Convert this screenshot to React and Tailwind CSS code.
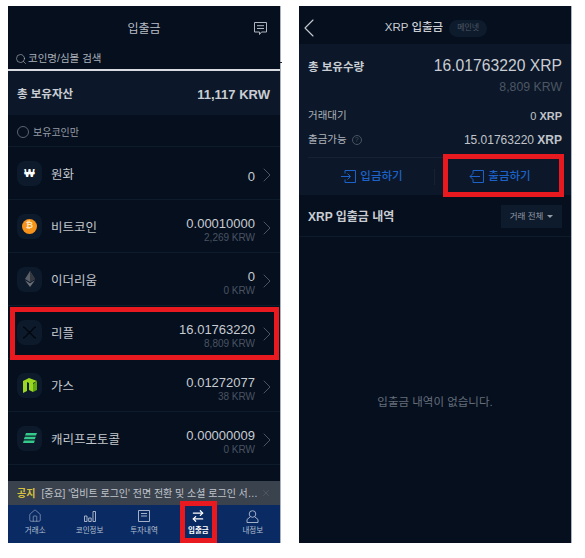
import React from "react";
import { ChevronRight, ChevronLeft, Search, X, House, ArrowRightLeft } from "lucide-react";

const FONT = { fontFamily: '"Liberation Sans","Noto Sans CJK KR",sans-serif' };

function CoinIcon({ children }) {
  return <div className="w-[25px] h-[25px] rounded-[8px] bg-[#0d1a2b] flex items-center justify-center shrink-0">{children}</div>;
}

const coins = [
  { name: "원화", amt: "0", krw: null, icon: <span className="text-white text-[11px] font-bold">₩</span> },
  { name: "비트코인", amt: "0.00010000", krw: "2,269 KRW", icon: (
    <div className="w-[15px] h-[15px] rounded-full bg-[#f7931a] flex items-center justify-center text-[#ffe3b8] text-[9px] font-bold">₿</div>
  ) },
  { name: "이더리움", amt: "0", krw: "0 KRW", icon: (
    <svg width="10" height="16" viewBox="0 0 10 16"><path d="M5 0L0 8l5 3 5-3z" fill="#5b5f66"/><path d="M5 0v11l5-3z" fill="#34383f"/><path d="M0 9.200L5 16l5-6.800-5 3z" fill="#6b6f76"/></svg>
  ) },
  { name: "리플", amt: "16.01763220", krw: "8,809 KRW", icon: (
    <svg width="15" height="13" viewBox="0 0 15 13" fill="none" stroke="#02060d" strokeWidth="1.500"><path d="M1 1c3 0 4 5 6.500 5S11 1 14 1M1 12c3 0 4-5 6.500-5S11 12 14 12"/></svg>
  ) },
  { name: "가스", amt: "0.01272077", krw: "38 KRW", icon: (
    <svg width="14" height="15" viewBox="0 0 14 15"><path d="M0 3l6-3 8 3-4 2v9l-4-2V5L4 4v9l-4 2z" fill="#9ad81f"/><path d="M10 6v8l4-2V3z" fill="#5fa80f"/></svg>
  ) },
  { name: "캐리프로토콜", amt: "0.00000009", krw: "0 KRW", icon: (
    <svg width="14" height="10" viewBox="0 0 14 10" fill="#35c98a"><path d="M3 0h11l-1 2.500H2zM1.800 3.700h11l-1 2.600h-11zM.8 7.500h11L11 10H0z"/></svg>
  ) },
];

function CoinRow({ c }) {
  return (
    <div className="h-[53px] shrink-0 flex items-center pl-[9px] pr-[1px] border-b border-[#0e1b2b]">
      <CoinIcon>{c.icon}</CoinIcon>
      <span className="ml-[9px] mt-[4px] text-[12.500px] text-[#c3c7cd] flex-1">{c.name}</span>
      <div className="text-right mt-[8px]">
        <div className="text-[13px] leading-[16px] text-[#c8ccd2]">{c.amt}</div>
        {c.krw && <div className="text-[10px] leading-[12px] text-[#4a5361]">{c.krw}</div>}
      </div>
      <ChevronRight size={24} strokeWidth={0.800} className="text-[#5d6673] shrink-0 mt-[4px]" />
    </div>
  );
}

function NavItem({ icon, label, active }) {
  return (
    <div className={`flex-1 flex flex-col items-center pt-[3px] ${active ? "text-white font-bold" : "text-[#b4c0d2]"}`}>
      <div className="h-[16px] flex items-center">{icon}</div>
      <span className="text-[7.500px] leading-[10px] mt-[2px]">{label}</span>
    </div>
  );
}

function RedBox({ className }) {
  return <div className={`absolute border-[5px] border-[#e8191f] pointer-events-none ${className}`} />;
}

export default function App() {
  return (
    <div className="relative w-[585px] h-[558px] bg-white overflow-hidden" style={FONT}>
      <div className="flex gap-[19px] pl-[8px] pt-[6px]">
        {/* left */}
        <div className="w-[272px] h-[537px] bg-[#050f1e] flex flex-col overflow-hidden">
          <div className="h-[37px] shrink-0 flex items-center justify-center relative">
            <span className="text-[12px] text-[#b9bec6] mt-[8px]">입출금</span>
            <svg className="absolute right-[13px] top-[16px]" width="13" height="14" viewBox="0 0 13 14" fill="none" stroke="#b0b5bd" strokeWidth="1">
              <path d="M.5.500h12v9.500H7.500l-2 2.500V10H.5z"/><path d="M3 3.700h7M3 6.500h7"/>
            </svg>
          </div>
          <div className="h-[28px] shrink-0 flex items-center pl-[7px] pt-[5px] border-b-2 border-[#d8dce2]">
            <Search size={12} strokeWidth={1.200} className="text-[#b5bac2]" />
            <span className="ml-[1px] text-[10.500px] text-[#aab0b9]">코인명/심볼 검색</span>
          </div>
          <div className="h-[44px] shrink-0 bg-[#0c1829] flex items-center justify-between pl-[9px] pr-[10px] pt-[4px] font-bold text-[#c9cdd3]">
            <span className="text-[11.500px]">총 보유자산</span>
            <span className="text-[13px]">11,117 KRW</span>
          </div>
          <div className="h-[32px] shrink-0 flex items-center pl-[9px] pt-[3px] border-b border-[#0e1b2b]">
            <div className="w-[12px] h-[12px] rounded-full border border-[#5a6370]" />
            <span className="ml-[4px] text-[10px] text-[#969ca6]">보유코인만</span>
          </div>
          {coins.map((c) => <CoinRow key={c.name} c={c} />)}
          <div className="flex-1 min-h-0 relative overflow-hidden">
            <span className="absolute left-[43px] top-[11px] text-[13px] text-[#c3c7cd]">XYM</span>
          </div>
          <div className="h-[24px] shrink-0 bg-[#3a424e] flex items-center pl-[9px] pr-[9px] text-[10px]">
            <span className="text-[#d8c23d] font-bold">공지</span>
            <span className="ml-[6px] text-[#c0c4ca] flex-1 whitespace-nowrap">[중요] '업비트 로그인' 전면 전환 및 소셜 로그인 서…</span>
            <X size={10} strokeWidth={1} className="text-[#6b7280] shrink-0" />
          </div>
          <div className="h-[38px] shrink-0 bg-[#0a2a63] flex">
            <NavItem label="거래소" icon={<House size={14} strokeWidth={1} />} />
            <NavItem label="코인정보" icon={
              <svg width="12" height="11" viewBox="0 0 12 11" fill="none" stroke="currentColor" strokeWidth=".9"><path d="M.5 5h2.500v5.500H.5zM4.700 7h2.500v3.500H4.700zM9 .5h2.500v10H9z"/></svg>
            } />
            <NavItem label="투자내역" icon={
              <svg width="12" height="12" viewBox="0 0 12 12" fill="none" stroke="currentColor" strokeWidth=".9"><path d="M.5.500h11v11H.5zM3 3.500h6M3 6h6"/></svg>
            } />
            <NavItem label="입출금" active icon={<ArrowRightLeft size={14} strokeWidth={2.200} />} />
            <NavItem label="내정보" icon={
              <svg width="13" height="13" viewBox="0 0 13 13" fill="none" stroke="currentColor" strokeWidth=".9"><circle cx="6.500" cy="4" r="3.300"/><path d="M4 7L1 9.500v3h11v-3L9 7"/></svg>
            } />
          </div>
        </div>
        {/* right */}
        <div className="w-[272px] h-[537px] bg-[#050f1e] flex flex-col overflow-hidden">
          <div className="h-[38px] shrink-0 flex items-center relative">
            <ChevronLeft size={32} strokeWidth={0.800} className="text-[#c7cbd1] absolute left-[-6px] top-[6px]" />
            <div className="flex-1 flex items-center justify-center mt-[6px]">
              <span className="text-[11.500px] text-[#c9cdd3] font-medium ml-[2px]">XRP 입출금</span>
              <span className="ml-[6px] w-[38px] h-[17px] rounded-full bg-[#0e1b2c] text-[8px] text-[#4f5865] flex items-center justify-center">메인넷</span>
            </div>
          </div>
          <div className="h-[151px] shrink-0 bg-[#0c1829] flex flex-col px-[9px]">
            <div className="flex justify-between items-start pt-[13px]">
              <span className="text-[11.500px] font-bold text-[#c9cdd3] mt-[2px]">총 보유수량</span>
              <div className="text-right">
                <div className="text-[15.700px] leading-[18px] text-[#c9cdd3]">16.01763220 XRP</div>
                <div className="text-[12.300px] leading-[14px] mt-[5px] text-[#4d5663]">8,809 KRW</div>
              </div>
            </div>
            <div className="flex justify-between items-center mt-[15px] h-[14px] text-[10.500px] text-[#aeb3bb]">
              <span>거래대기</span>
              <span className="text-[11px] text-[#c0c4ca]">0 <b>XRP</b></span>
            </div>
            <div className="flex justify-between items-center mt-[10px] h-[14px] text-[10.500px] text-[#aeb3bb]">
              <span className="flex items-center">출금가능
                <span className="ml-[5px] w-[10px] h-[10px] rounded-full border border-[#4a5361] text-[7px] text-[#4a5361] flex items-center justify-center">?</span>
              </span>
              <span className="text-[12px] text-[#c0c4ca]">15.01763220 <b>XRP</b></span>
            </div>
            <div className="flex-1 flex items-center border-t border-[#152233] mt-[10px]">
              <div className="flex-1 flex items-center justify-center text-[#1c62c9] text-[11.500px] font-medium pl-[2px]">
                <svg width="15" height="13" viewBox="0 0 15 13" fill="none" stroke="currentColor" strokeWidth="1"><path d="M4 3.500V.5h10.500v12H4V9.500M0 6.500h9M6.500 3.500l3 3-3 3"/></svg>
                <span className="ml-[4px]">입금하기</span>
              </div>
              <div className="w-px h-[16px] bg-[#152233]" />
              <div className="flex-1 flex items-center justify-center text-[#1c62c9] text-[11.500px] font-medium pl-[3px]">
                <svg width="15" height="13" viewBox="0 0 15 13" fill="none" stroke="currentColor" strokeWidth="1"><path d="M4 3.500V.5h10.500v12H4V9.500M11 6.500H1M4 3.500l-3 3 3 3"/></svg>
                <span className="ml-[4px]">출금하기</span>
              </div>
            </div>
          </div>
          <div className="h-[42px] shrink-0 flex items-center justify-between px-[9px] pt-[2px] border-b border-[#0e1b2b]">
            <span className="text-[12px] font-bold text-[#c9cdd3]">XRP 입출금 내역</span>
            <div className="w-[61px] h-[23px] bg-[#0e1b2c] flex items-center justify-center text-[8.500px] text-[#969ca6]">
              거래 전체
              <span className="ml-[4px] w-0 h-0 border-x-[3px] border-x-transparent border-t-[3px] border-t-[#969ca6]" />
            </div>
          </div>
          <div className="flex-1 flex items-center justify-center pt-[26px] text-[11.500px] text-[#666e7b]">입출금 내역이 없습니다.</div>
        </div>
      </div>
      {/* frame edges */}
      <div className="absolute left-[280px] top-[6px] w-px h-[537px] bg-[#a9b2bf]" />
      <div className="absolute left-[571px] top-[6px] w-px h-[537px] bg-[#a9b2bf]" />
      <div className="absolute left-[280px] top-[62px] w-[2px] h-px bg-[#222]" />
      <RedBox className="left-[10px] top-[307px] w-[269px] h-[53px]" />
      <RedBox className="left-[180px] top-[501px] w-[37px] h-[42px]" />
      <RedBox className="left-[443px] top-[154px] w-[121px] h-[43px]" />
    </div>
  );
}
